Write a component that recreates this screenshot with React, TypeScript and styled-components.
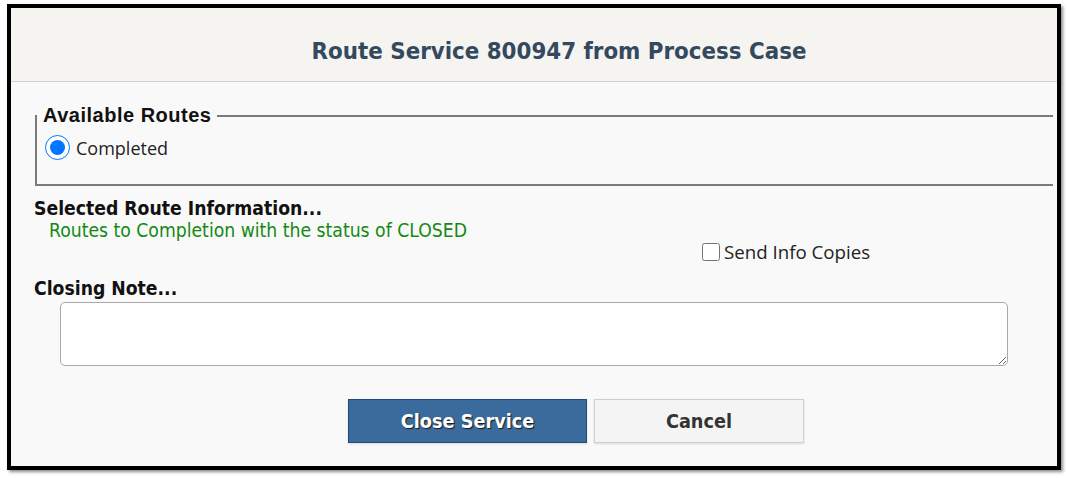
import React from "react";
import styled, { createGlobalStyle } from "styled-components";

const Global = createGlobalStyle`
  html, body { margin: 0; padding: 0; background: #ffffff; }
  body { font-family: "DejaVu Sans Condensed", "DejaVu Sans", sans-serif; }
`;

const Page = styled.div`
  padding: 4px 0 0 7px;
  width: 1068px;
  height: 478px;
  box-sizing: border-box;
`;

const Dialog = styled.div`
  width: 1054px;
  height: 466px;
  box-sizing: border-box;
  border: 4px solid #000;
  box-shadow: 2px 2px 3px rgba(0, 0, 0, 0.45);
  background: #f9f9f9;
  display: flex;
  flex-direction: column;
  overflow: hidden;
`;

const Header = styled.div`
  height: 74px;
  box-sizing: border-box;
  background: #f5f4f1;
  border-bottom: 1px solid #d4d2c6;
  display: flex;
  align-items: center;
  justify-content: center;
  padding: 12px 0 0 50px;
`;

const Title = styled.h1`
  margin: 0;
  font-family: "DejaVu Sans Condensed", "DejaVu Sans", sans-serif;
  font-weight: bold;
  font-size: 23.8px;
  color: #34495e;
`;

const Body = styled.div`
  padding: 22px 4px 0 23px;
  display: flex;
  flex-direction: column;
`;

const Fieldset = styled.fieldset`
  margin: 0 0 0 1px;
  padding: 8px 0 24px 8px;
  border: 2px solid #7a7a7a;
  border-right: none;
  min-width: 0;
`;

const Legend = styled.legend`
  padding: 0 6px 0 6px;
  margin-left: -8px;
  font-family: "Liberation Sans", Arial, sans-serif;
  font-weight: bold;
  font-size: 20px;
  letter-spacing: 0.5px;
  color: #111;
`;

const RadioRow = styled.label`
  display: flex;
  align-items: center;
  gap: 6px;
  font-family: "Open Sans", sans-serif;
  font-size: 18px;
  color: #222;
`;

const Radio = styled.input`
  width: 25px;
  height: 25px;
  margin: 0;
  accent-color: #0075ff;
`;

const SectionLabel = styled.div<{ $top: number }>`
  margin-top: ${(p) => p.$top}px;
  font-family: "DejaVu Sans Condensed", "DejaVu Sans", sans-serif;
  font-weight: bold;
  font-size: 19.2px;
  color: #111;
`;

const Info = styled.div`
  margin-top: -1px;
  padding-left: 15px;
  font-family: "DejaVu Sans Condensed", "DejaVu Sans", sans-serif;
  font-size: 19.2px;
  color: #128a12;
`;

const CopyRow = styled.label`
  align-self: flex-start;
  margin: -3px 0 0 668px;
  display: flex;
  align-items: center;
  gap: 4px;
  font-family: "Open Sans", sans-serif;
  font-size: 18.7px;
  color: #222;
`;

const Check = styled.input`
  width: 18px;
  height: 18px;
  margin: 0;
`;

const NoteArea = styled.textarea`
  margin: 2px 0 0 26px;
  width: 948px;
  height: 64px;
  box-sizing: border-box;
  border: 1px solid #a9a9a9;
  border-radius: 5px;
  background: #fff;
  resize: vertical;
`;

const Buttons = styled.div`
  display: flex;
  justify-content: center;
  gap: 7px;
  margin-top: 33px;
  padding-left: 65px;
`;

const Button = styled.button<{ $primary?: boolean }>`
  height: 44px;
  width: ${(p) => (p.$primary ? 239 : 210)}px;
  box-sizing: border-box;
  font-family: "DejaVu Sans Condensed", "DejaVu Sans", sans-serif;
  font-weight: bold;
  font-size: 19.7px;
  border: 1px solid ${(p) => (p.$primary ? "#1f4d78" : "#cfcfcf")};
  background: ${(p) => (p.$primary ? "#3b6b9d" : "#f4f4f4")};
  color: ${(p) => (p.$primary ? "#ffffff" : "#333333")};
  text-shadow: ${(p) => (p.$primary ? "1px 1px 1px #1a1a1a" : "none")};
  box-shadow: 0 1px 2px rgba(0, 0, 0, 0.12);
  cursor: pointer;
`;

export default function App() {
  return (
    <>
      <Global />
      <Page>
        <Dialog>
          <Header>
            <Title>Route Service 800947 from Process Case</Title>
          </Header>
          <Body>
            <Fieldset>
              <Legend>Available Routes</Legend>
              <RadioRow>
                <Radio type="radio" name="route" defaultChecked />
                Completed
              </RadioRow>
            </Fieldset>
            <SectionLabel $top={11}>Selected Route Information...</SectionLabel>
            <Info>Routes to Completion with the status of CLOSED</Info>
            <CopyRow>
              <Check type="checkbox" />
              Send Info Copies
            </CopyRow>
            <SectionLabel $top={13}>Closing Note...</SectionLabel>
            <NoteArea />
            <Buttons>
              <Button $primary>Close Service</Button>
              <Button>Cancel</Button>
            </Buttons>
          </Body>
        </Dialog>
      </Page>
    </>
  );
}
